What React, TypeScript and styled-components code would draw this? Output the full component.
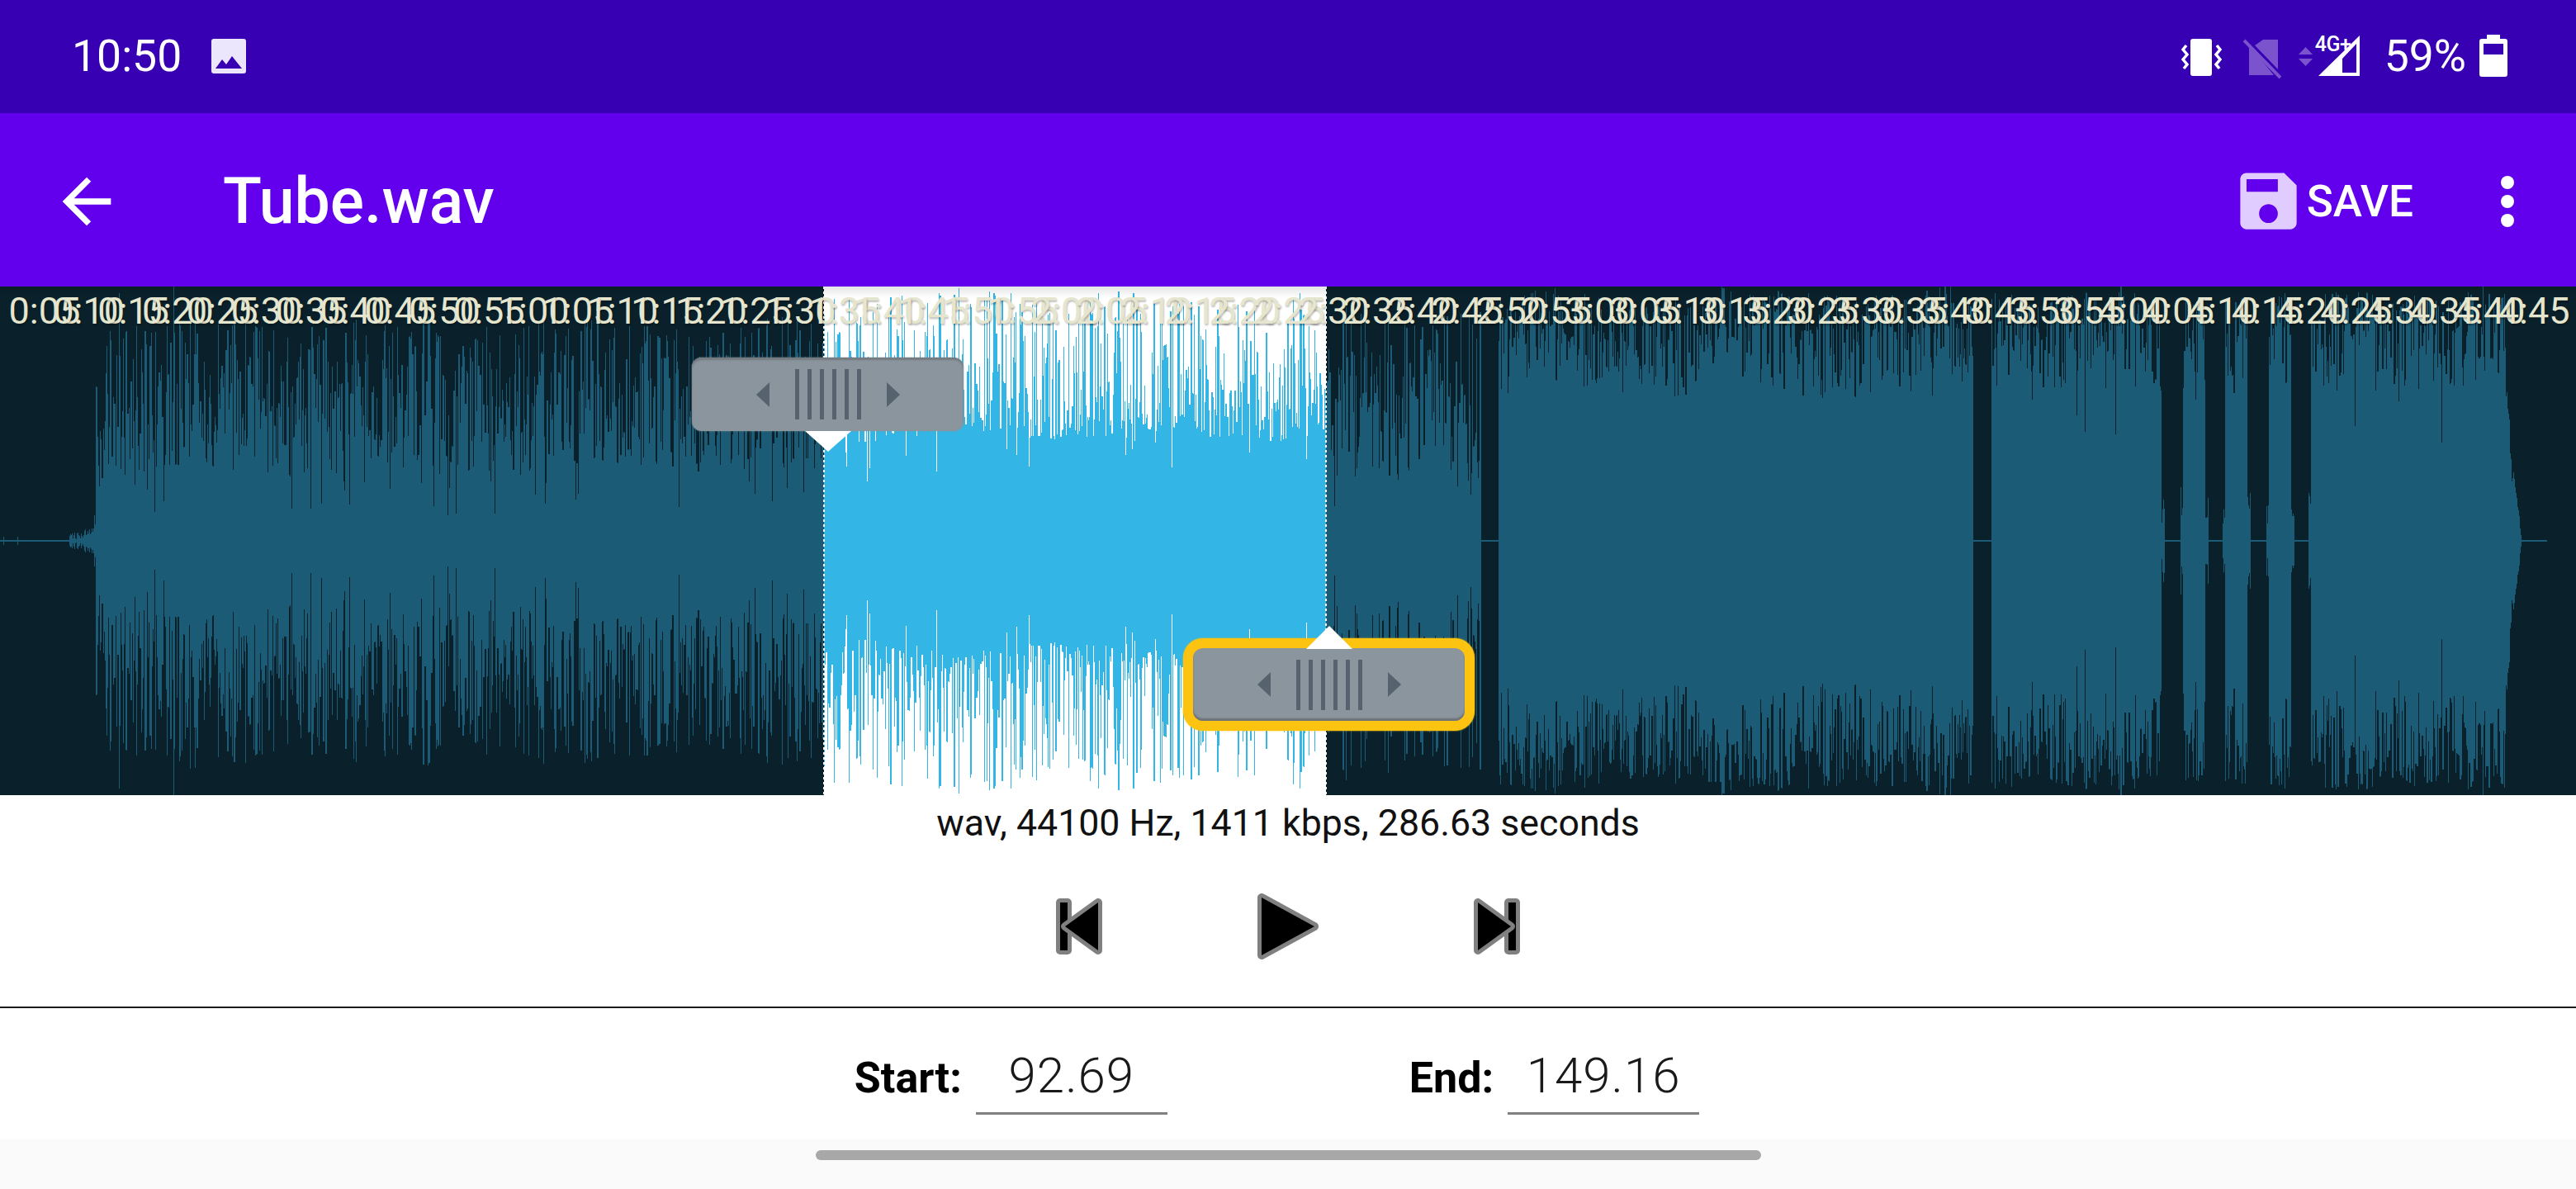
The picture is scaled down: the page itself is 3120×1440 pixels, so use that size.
import { useMemo } from "react";
import styled, { createGlobalStyle } from "styled-components";

const PAGE_W = 3120;
const WAVE_H = 616;
const MID = 308;
const SEL_START = 998;
const SEL_END = 1606;
const LABEL_PITCH = 53.85;

const GlobalStyle = createGlobalStyle`
  html, body {
    margin: 0;
    padding: 0;
    background: #ffffff;
  }
  body {
    font-family: Roboto, "Liberation Sans", sans-serif;
  }
`;

const mulberry = (seed: number) => () => {
  seed |= 0;
  seed = (seed + 0x6d2b79f5) | 0;
  let t = Math.imul(seed ^ (seed >>> 15), 1 | seed);
  t = (t + Math.imul(t ^ (t >>> 7), 61 | t)) ^ t;
  return ((t ^ (t >>> 14)) >>> 0) / 4294967296;
};

// dark gaps in the track: [from, to]
const GAPS = [
  [1794, 1815],
  [2390, 2412],
  [2618, 2644],
  [2671, 2695],
  [2722, 2748],
  [2775, 2799],
];

const sectionFor = (x: number) => {
  if (x < SEL_START) return { low: 85, high: 265, bias: 1.05, deep: 0.04, deepLow: 35 };
  if (x < SEL_END) return { low: 130, high: 300, bias: 1.7, deep: 0.035, deepLow: 75 };
  if (x < 1794) return { low: 75, high: 285, bias: 1.1, deep: 0.02, deepLow: 40 };
  return { low: 175, high: 300, bias: 0.7, deep: 0.008, deepLow: 100 };
};

const buildAmps = () => {
  const rand = mulberry(4711);
  const amps: number[] = [];
  let run = 0;
  let held = 0;
  for (let x = 0; x < PAGE_W; x++) {
    let amp = 1;
    const gap = GAPS.find(([a, b]) => x >= a && x < b);
    if (x < 85) {
      amp = rand() < 0.06 ? 3 + rand() * 5 : 1;
    } else if (x < 116) {
      amp = (x > 100 ? 6 : 2) + rand() * (x > 108 ? 30 : 8);
    } else if (x >= 3085) {
      amp = 0;
    } else if (x >= 3054) {
      amp = 1;
    } else if (gap) {
      const edge = Math.min(x - gap[0], gap[1] - x);
      amp = edge < 4 && gap[0] > 2500 ? 20 + rand() * 45 : 1;
    } else {
      const s = sectionFor(x);
      if (run <= 0) {
        const r = rand();
        if (r < s.deep) {
          held = s.deepLow + rand() * (s.low - s.deepLow);
          run = 1;
        } else {
          held = s.low + (s.high - s.low) * Math.pow(rand(), s.bias);
          run = rand() < 0.25 ? 2 : 1;
        }
      }
      run--;
      const slow = 0.6 * Math.sin(x / 37 + 1.3) + 0.4 * Math.sin(x / 11.3);
      amp = held + slow * 12;
      if (rand() < 0.004) amp = 300;
      if (x === 210) amp = 315;
      if (x >= 3035) amp *= (3054 - x) / 30;
    }
    amps.push(amp);
  }
  return amps;
};

const Page = styled.div`
  width: 3120px;
  height: 1440px;
  overflow: hidden;
  display: flex;
  flex-direction: column;
  background: #ffffff;
`;

const StatusBar = styled.div`
  height: 137px;
  box-sizing: border-box;
  padding: 38px 83px 0 87px;
  display: flex;
  justify-content: space-between;
  align-items: flex-start;
  background: #3700b3;
  color: #ffffff;
`;

const StatusGroup = styled.div`
  display: flex;
  align-items: flex-start;
`;

const StatusText = styled.span<{ $gap?: number }>`
  font-size: 53.5px;
  line-height: 60px;
  margin-right: ${(p) => p.$gap ?? 0}px;
`;

const StatusIcon = styled.svg<{ $left?: number }>`
  display: block;
  height: 60px;
  margin-left: ${(p) => p.$left ?? 0}px;
`;

const SignalWrap = styled.div`
  position: relative;
  margin-left: 3px;
  margin-right: 30px;
`;

const NetBadge = styled.span`
  position: absolute;
  left: 0;
  top: 2px;
  font-size: 25px;
  line-height: 28px;
  font-weight: 500;
  letter-spacing: -0.5px;
  color: #ffffff;
  white-space: nowrap;
`;

const Toolbar = styled.div`
  height: 210px;
  box-sizing: border-box;
  display: flex;
  align-items: center;
  padding: 3px 0 0 61px;
  background: #6200ee;
  color: #ffffff;
`;

const BackIcon = styled.svg`
  display: block;
  width: 88px;
  height: 88px;
  fill: #ffffff;
`;

const Title = styled.div`
  margin-left: 121px;
  font-size: 77px;
  font-weight: 500;
  line-height: 90px;
  flex: 1;
`;

const SaveIcon = styled.svg`
  display: block;
  width: 91px;
  height: 91px;
  fill: #e0ccff;
`;

const SaveLabel = styled.div`
  margin-left: 1px;
  font-size: 53px;
  font-weight: 500;
  line-height: 60px;
`;

const MoreIcon = styled.svg`
  display: block;
  width: 18px;
  height: 64px;
  margin: 0 74px 0 105px;
  fill: #ffffff;
`;

const WavePanel = styled.div`
  position: relative;
  height: ${WAVE_H}px;
  background: #0a212b;
  overflow: hidden;
`;

const WaveCanvas = styled.svg`
  display: block;
  width: 3120px;
  height: ${WAVE_H}px;
`;

const TimeRow = styled.div`
  position: absolute;
  left: 0;
  top: 4px;
  display: flex;
  padding-left: ${LABEL_PITCH / 2}px;
`;

const TimeLabel = styled.span`
  flex: 0 0 ${LABEL_PITCH}px;
  min-width: 0;
  display: flex;
  justify-content: center;
  white-space: nowrap;
  font-size: 45px;
  line-height: 52px;
  color: #e6e6cf;
  text-shadow: 1px 2px 2px rgba(0, 0, 0, 0.25);
`;

const TopShade = styled.div`
  position: absolute;
  left: 0;
  right: 0;
  top: 0;
  height: 14px;
  background: linear-gradient(rgba(0, 0, 0, 0.1), rgba(0, 0, 0, 0));
`;

const Handle = styled.div<{ $left: number; $top: number; $active?: boolean }>`
  position: absolute;
  left: ${(p) => p.$left}px;
  top: ${(p) => p.$top}px;
  width: 329px;
  height: ${(p) => (p.$active ? 88 : 89)}px;
  display: flex;
  align-items: center;
  justify-content: center;
  gap: 31px;
  border-radius: 12px;
  background: #8b959e;
  box-shadow: ${(p) =>
    p.$active
      ? "inset 0 -3px 2px #6d7276, 0 0 0 12px #fdc311, 0 0 2px 12px #fdc311"
      : "inset 0 3px 2px #747a80, 0 0 2px #8b959e"};
`;

const HandleArrow = styled.svg`
  display: block;
  width: 16px;
  height: 30px;
  fill: #56636e;
`;

const Grip = styled.div`
  display: flex;
  justify-content: space-between;
  width: 80px;
  height: 61px;
`;

const GripBar = styled.span`
  display: block;
  width: 5px;
  background: #56636e;
`;

const Notch = styled.span<{ $up?: boolean }>`
  position: absolute;
  left: 50%;
  margin-left: -28px;
  width: 0;
  height: 0;
  border-left: 28px solid transparent;
  border-right: 28px solid transparent;
  ${(p) =>
    p.$up
      ? "top: -27px; border-bottom: 28px solid #ffffff;"
      : "bottom: -25px; border-top: 25px solid #ffffff;"}
`;

const InfoLine = styled.div`
  height: 76px;
  box-sizing: border-box;
  padding-top: 8px;
  text-align: center;
  font-size: 44.7px;
  line-height: 52px;
  color: #111111;
`;

const Transport = styled.div`
  height: 180px;
  box-sizing: border-box;
  padding-bottom: 14px;
  display: flex;
  align-items: center;
  justify-content: center;
  gap: 188px;
`;

const TransportIcon = styled.svg`
  display: block;
  fill: #000000;
  stroke: #808080;
  stroke-linejoin: round;
  paint-order: stroke;
`;

const Divider = styled.div`
  height: 2px;
  background: #1c1c1c;
`;

const FieldRow = styled.div`
  height: 159px;
  box-sizing: border-box;
  padding: 0 27px 0 0;
  display: flex;
  align-items: flex-start;
  justify-content: center;
`;

const FieldLabel = styled.div`
  margin-top: 55px;
  margin-right: 17px;
  font-size: 52px;
  font-weight: 700;
  line-height: 60px;
  color: #000000;
`;

const FieldValue = styled.div<{ $gap?: number }>`
  width: 232px;
  height: 129px;
  box-sizing: border-box;
  margin-right: ${(p) => p.$gap ?? 0}px;
  padding-top: 49px;
  border-bottom: 3px solid #808080;
  text-align: center;
  font-size: 60px;
  font-weight: 300;
  letter-spacing: 1px;
  line-height: 66px;
  color: #1a1a1a;
`;

const NavBar = styled.div`
  flex: 1;
  display: flex;
  justify-content: center;
  padding-top: 13px;
  background: #fafafa;
`;

const NavHandle = styled.div`
  width: 1145px;
  height: 12px;
  border-radius: 6px;
  background: #a8a8a8;
`;

const labels = Array.from({ length: 57 }, (_, i) => {
  const total = (i + 1) * 5;
  return `${Math.floor(total / 60)}:${String(total % 60).padStart(2, "0")}`;
});

const HandleBody = ({ up }: { up?: boolean }) => (
  <>
    <Notch $up={up} />
    <HandleArrow viewBox="0 0 16 30">
      <path d="M16 0V30L0 15Z" />
    </HandleArrow>
    <Grip>
      {[0, 1, 2, 3, 4, 5].map((i) => (
        <GripBar key={i} />
      ))}
    </Grip>
    <HandleArrow viewBox="0 0 16 30">
      <path d="M0 0V30L16 15Z" />
    </HandleArrow>
  </>
);

const App = () => {
  const paths = useMemo(() => {
    const amps = buildAmps();
    let outside = "";
    let inside = "";
    amps.forEach((amp, x) => {
      if (amp <= 0) return;
      const seg = `M${x + 0.5} ${MID - amp}V${MID + amp}`;
      if (x >= SEL_START && x < SEL_END) inside += seg;
      else outside += seg;
    });
    return { outside, inside };
  }, []);

  return (
    <Page>
      <GlobalStyle />
      <StatusBar>
        <StatusGroup>
          <StatusText $gap={36}>10:50</StatusText>
          <StatusIcon viewBox="0 38 42 60" width="42">
            <path
              fill="#ebe6fb"
              fillRule="evenodd"
              d="M3 47H39A3 3 0 0 1 42 50V86A3 3 0 0 1 39 89H3A3 3 0 0 1 0 86V50A3 3 0 0 1 3 47ZM5 83H37L25 68L18 78L13 72Z"
            />
          </StatusIcon>
        </StatusGroup>
        <StatusGroup>
          <StatusIcon viewBox="0 38 49 60" width="49">
            <rect x="11" y="47" width="26" height="45" rx="3" fill="#ffffff" />
            <path
              d="M6 55L2 60L7 66L2 72L7 78L3 83M43 55L47 60L42 66L47 72L42 78L46 83"
              fill="none"
              stroke="#ffffff"
              strokeWidth="3.5"
            />
          </StatusIcon>
          <StatusIcon viewBox="0 38 46 60" width="46" $left={26}>
            <path fill="#7b53cd" d="M24 48H42V84L14 55ZM7 54L37 91H7Z" />
            <path d="M1 49L45 94" stroke="#7b53cd" strokeWidth="4" />
          </StatusIcon>
          <StatusIcon viewBox="0 38 17 60" width="17" $left={21}>
            <path fill="#7b53cd" d="M8.5 57L17 66H0ZM0 71H17L8.5 80Z" />
          </StatusIcon>
          <SignalWrap>
            <StatusIcon viewBox="0 38 54 60" width="54">
              <path
                fill="#ffffff"
                fillRule="evenodd"
                d="M4 92L54 43V92ZM33 71V88H50V53Z"
              />
            </StatusIcon>
            <NetBadge>4G+</NetBadge>
          </SignalWrap>
          <StatusText $gap={16}>59%</StatusText>
          <StatusIcon viewBox="0 38 34 60" width="34">
            <path
              fill="#ffffff"
              fillRule="evenodd"
              d="M9 42H25V47H31A3 3 0 0 1 34 50V90A3 3 0 0 1 31 93H3A3 3 0 0 1 0 90V50A3 3 0 0 1 3 47H9ZM5 53V66H29V53Z"
            />
          </StatusIcon>
        </StatusGroup>
      </StatusBar>

      <Toolbar>
        <BackIcon viewBox="0 0 24 24">
          <path d="M20 11H7.83l5.59-5.59L12 4l-8 8 8 8 1.41-1.41L7.83 13H20v-2z" />
        </BackIcon>
        <Title>Tube.wav</Title>
        <SaveIcon viewBox="0 0 24 24">
          <path d="M17 3H5c-1.11 0-2 .9-2 2v14c0 1.1.89 2 2 2h14c1.1 0 2-.9 2-2V7l-4-4zm-5 16c-1.66 0-3-1.34-3-3s1.34-3 3-3 3 1.34 3 3-1.34 3-3 3zm3-10H5V5h10v4z" />
        </SaveIcon>
        <SaveLabel>SAVE</SaveLabel>
        <MoreIcon viewBox="0 0 18 64">
          <circle cx="9" cy="9" r="8" />
          <circle cx="9" cy="32" r="8" />
          <circle cx="9" cy="55" r="8" />
        </MoreIcon>
      </Toolbar>

      <WavePanel>
        <WaveCanvas viewBox={`0 0 ${PAGE_W} ${WAVE_H}`}>
          <rect x={SEL_START} y="0" width={SEL_END - SEL_START} height={WAVE_H} fill="#ffffff" />
          <path d={paths.outside} stroke="#1b5b75" strokeWidth="1" shapeRendering="crispEdges" />
          <path d={paths.inside} stroke="#33b5e5" strokeWidth="1" shapeRendering="crispEdges" />
          <path
            d={`M${SEL_START} 0V${WAVE_H}M${SEL_END} 0V${WAVE_H}`}
            stroke="#ffffff"
            strokeWidth="2"
            strokeDasharray="3 3"
          />
        </WaveCanvas>
        <TopShade />
        <TimeRow>
          {labels.map((label) => (
            <TimeLabel key={label}>{label}</TimeLabel>
          ))}
        </TimeRow>
        <Handle $left={838} $top={86}>
          <HandleBody />
        </Handle>
        <Handle $left={1445} $top={438} $active>
          <HandleBody up />
        </Handle>
      </WavePanel>

      <InfoLine>wav, 44100 Hz, 1411 kbps, 286.63 seconds</InfoLine>

      <Transport>
        <TransportIcon viewBox="0 0 56 68" width="56" height="68" strokeWidth="10">
          <path d="M5 5H14V63H5Z" />
          <path d="M11 34L51 5V63Z" />
        </TransportIcon>
        <TransportIcon viewBox="0 0 74 80" width="74" height="80" strokeWidth="10">
          <path d="M5 5V75L69 40Z" />
        </TransportIcon>
        <TransportIcon viewBox="0 0 56 68" width="56" height="68" strokeWidth="10">
          <path d="M42 5H51V63H42Z" />
          <path d="M45 34L5 5V63Z" />
        </TransportIcon>
      </Transport>

      <Divider />

      <FieldRow>
        <FieldLabel>Start:</FieldLabel>
        <FieldValue $gap={293}>92.69</FieldValue>
        <FieldLabel>End:</FieldLabel>
        <FieldValue>149.16</FieldValue>
      </FieldRow>

      <NavBar>
        <NavHandle />
      </NavBar>
    </Page>
  );
};

export default App;
